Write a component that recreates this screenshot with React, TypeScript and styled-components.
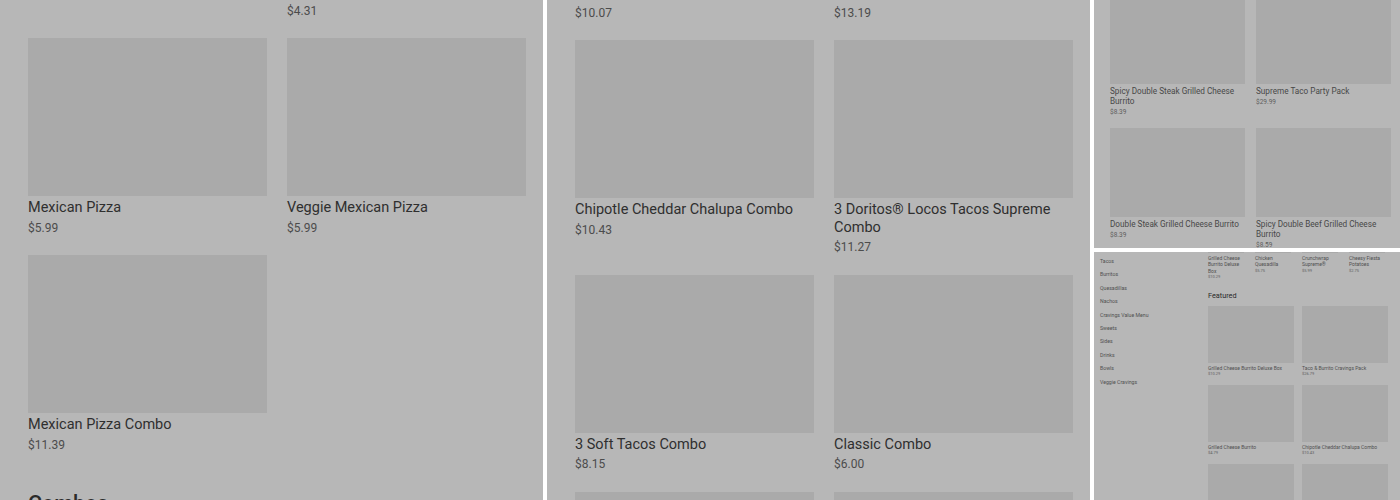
import { createGlobalStyle, styled } from "styled-components";

type Item = { name: string; price: string; noImage?: boolean };

const pizza: Item[] = [
  { name: "\u00a0", price: "", noImage: true },
  { name: "\u00a0", price: "$4.31", noImage: true },
  { name: "Mexican Pizza", price: "$5.99" },
  { name: "Veggie Mexican Pizza", price: "$5.99" },
  { name: "Mexican Pizza Combo", price: "$11.39" },
];

const combos: Item[] = [
  { name: "3 Crunchy Tacos Supreme Combo", price: "$10.07", noImage: true },
  { name: "Toasted Cheesy Chalupa Combo", price: "$13.19", noImage: true },
  { name: "Chipotle Cheddar Chalupa Combo", price: "$10.43" },
  { name: "3 Doritos® Locos Tacos Supreme Combo", price: "$11.27" },
  { name: "3 Soft Tacos Combo", price: "$8.15" },
  { name: "Classic Combo", price: "$6.00" },
];

const burritos: Item[] = [
  { name: "Spicy Double Steak Grilled Cheese Burrito", price: "$8.39" },
  { name: "Supreme Taco Party Pack", price: "$29.99" },
  { name: "Double Steak Grilled Cheese Burrito", price: "$8.39" },
  { name: "Spicy Double Beef Grilled Cheese Burrito", price: "$8.59" },
];

const categories = [
  "Tacos",
  "Burritos",
  "Quesadillas",
  "Nachos",
  "Cravings Value Menu",
  "Sweets",
  "Sides",
  "Drinks",
  "Bowls",
  "Veggie Cravings",
];

const popular: Item[] = [
  { name: "Grilled Cheese Burrito Deluxe Box", price: "$10.29" },
  { name: "Chicken Quesadilla", price: "$5.75" },
  { name: "Crunchwrap Supreme®", price: "$5.99" },
  { name: "Cheesy Fiesta Potatoes", price: "$2.75" },
];

const featured: Item[] = [
  { name: "Grilled Cheese Burrito Deluxe Box", price: "$10.29" },
  { name: "Taco & Burrito Cravings Pack", price: "$26.79" },
  { name: "Grilled Cheese Burrito", price: "$4.79" },
  { name: "Chipotle Cheddar Chalupa Combo", price: "$10.43" },
];

const LargeCards = ({ items }: { items: Item[] }) => (
  <>
    {items.map((item, index) => (
      <LargeCard key={index}>
        {!item.noImage && <LargeImage />}
        <LargeName>{item.name}</LargeName>
        <LargePrice>{item.price}</LargePrice>
      </LargeCard>
    ))}
  </>
);

const App = () => {
  return (
    <>
      <GlobalStyle />
      <Screens>
        <LargePanel>
          <LargeGrid $shift={-21}>
            <LargeCards items={pizza} />
          </LargeGrid>
          <SectionTitle>Combos</SectionTitle>
        </LargePanel>

        <LargePanel>
          <LargeGrid $shift={-19}>
            <LargeCards items={combos} />
            <LargeImage />
            <LargeImage />
          </LargeGrid>
        </LargePanel>

        <SideColumn>
          <MediumPanel>
            <MediumGrid>
              {burritos.map((item, index) => (
                <div key={item.name}>
                  <MediumImage $cut={index < 2} />
                  <MediumName>{item.name}</MediumName>
                  <MediumPrice>{item.price}</MediumPrice>
                </div>
              ))}
            </MediumGrid>
          </MediumPanel>

          <SmallPanel>
            <CategoryList>
              {categories.map((name) => (
                <CategoryItem key={name}>{name}</CategoryItem>
              ))}
            </CategoryList>
            <SmallMain>
              <PopularRow>
                {popular.map((item) => (
                  <div key={item.name}>
                    <PopularImage />
                    <PopularName>{item.name}</PopularName>
                    <SmallPrice>{item.price}</SmallPrice>
                  </div>
                ))}
              </PopularRow>
              <SmallTitle>Featured</SmallTitle>
              <SmallGrid>
                {featured.map((item) => (
                  <div key={item.name}>
                    <SmallImage />
                    <SmallName>{item.name}</SmallName>
                    <SmallPrice>{item.price}</SmallPrice>
                  </div>
                ))}
                <SmallImage />
                <SmallImage />
              </SmallGrid>
            </SmallMain>
          </SmallPanel>
        </SideColumn>
      </Screens>
    </>
  );
};

export default App;

const GlobalStyle = createGlobalStyle`
  html, body {
    margin: 0;
    padding: 0;
    background: #ffffff;
  }
  body {
    font-family: Roboto, "Liberation Sans", sans-serif;
    overflow: hidden;
  }
`;

const Screens = styled.div`
  display: grid;
  grid-template-columns: 543px 543px 306px;
  column-gap: 4px;
  width: 1400px;
  height: 500px;
  overflow: hidden;
  background: #ffffff;
`;

const LargePanel = styled.section`
  height: 500px;
  overflow: hidden;
  padding-left: 28px;
  box-sizing: border-box;
  background: #b7b7b7;
`;

const LargeGrid = styled.div<{ $shift: number }>`
  display: grid;
  grid-template-columns: 239px 239px;
  column-gap: 20px;
  row-gap: 16.5px;
  margin-top: ${(p) => p.$shift}px;
`;

const LargeCard = styled.div`
  display: flex;
  flex-direction: column;
`;

const LargeImage = styled.div`
  height: 158px;
  background: #aaaaaa;
`;

const LargeName = styled.div`
  margin-top: 3px;
  font-size: 14.5px;
  line-height: 17.5px;
  font-weight: 400;
  color: #2f2f2f;
`;

const LargePrice = styled.div`
  margin-top: 1px;
  font-size: 12px;
  line-height: 21px;
  color: #4c4c4c;
`;

const SectionTitle = styled.h2`
  margin: 34px 0 0;
  font-size: 21.5px;
  line-height: 28px;
  font-weight: 500;
  color: #2b2b2b;
`;

const SideColumn = styled.div`
  display: grid;
  grid-template-rows: 248px 248px;
  row-gap: 4px;
`;

const MediumPanel = styled.section`
  overflow: hidden;
  background: #b7b7b7;
  padding-left: 16px;
`;

const MediumGrid = styled.div`
  display: grid;
  grid-template-columns: 135px 135px;
  column-gap: 11px;
  row-gap: 10px;
`;

const MediumImage = styled.div<{ $cut: boolean }>`
  height: ${(p) => (p.$cut ? 84 : 89)}px;
  background: #aaaaaa;
`;

const MediumName = styled.div`
  margin-top: 2px;
  font-size: 8.2px;
  line-height: 10px;
  color: #484848;
`;

const MediumPrice = styled.div`
  margin-top: 1px;
  font-size: 6.5px;
  line-height: 11px;
  color: #5e5e5e;
`;

const SmallPanel = styled.section`
  display: flex;
  overflow: hidden;
  background: #b7b7b7;
`;

const CategoryList = styled.nav`
  display: flex;
  flex-direction: column;
  width: 114px;
  padding: 3px 0 0 6px;
  box-sizing: border-box;
  flex-shrink: 0;
`;

const CategoryItem = styled.div`
  height: 13.4px;
  line-height: 13.4px;
  font-size: 5.2px;
  color: #505050;
  white-space: nowrap;
`;

const SmallMain = styled.div`
  width: 180px;
`;

const PopularRow = styled.div`
  display: grid;
  grid-template-columns: repeat(4, 36px);
  column-gap: 11px;
  height: 30px;
`;

const PopularImage = styled.div`
  height: 1px;
  margin-bottom: 2px;
  background: #aaaaaa;
`;

const PopularName = styled.div`
  font-size: 5px;
  line-height: 6.4px;
  color: #505050;
`;

const SmallTitle = styled.h3`
  margin: 8px 0 0;
  font-size: 7.3px;
  line-height: 12px;
  font-weight: 400;
  color: #2a2a2a;
`;

const SmallGrid = styled.div`
  display: grid;
  grid-template-columns: 86px 86px;
  column-gap: 8px;
  row-gap: 8px;
  margin-top: 4px;
`;

const SmallImage = styled.div`
  height: 57px;
  background: #aaaaaa;
`;

const SmallName = styled.div`
  margin-top: 2px;
  font-size: 5px;
  line-height: 6px;
  color: #505050;
`;

const SmallPrice = styled.div`
  font-size: 4px;
  line-height: 6px;
  color: #606060;
`;
